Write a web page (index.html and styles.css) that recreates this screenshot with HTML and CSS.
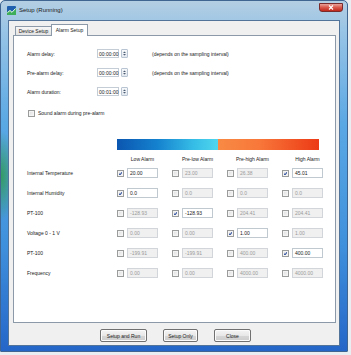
FILE: index.html
```html
<!DOCTYPE html>
<html lang="en">
<head>
    <meta charset="UTF-8">
    <title>Setup (Running)</title>
    <link rel="stylesheet" href="styles.css">
</head>
<body>

    <div class="window">
        <div class="titlebar">
            <svg class="app-icon" viewBox="0 0 9 9">
                <rect x="0" y="0" width="9" height="9" rx="1" fill="#1f5fae"/>
                <path d="M0 9 L0 6 L3 4 L5 6 L9 2 L9 9 Z" fill="#3fae5a"/>
                <path d="M0.5 6.5 L3 4.5 L5 6.3 L8.5 2.5" stroke="#ffffff" stroke-width="0.9" fill="none"/>
            </svg>
            <span class="title">Setup (Running)</span>
            <div class="close-btn">
                <svg viewBox="0 0 6 5"><path d="M1 0.5 L5 4.5 M5 0.5 L1 4.5" stroke="#ffffff" stroke-width="1.1"/></svg>
            </div>
        </div>

        <div class="client">
            <div class="tabs">
                <div class="tab">Device Setup</div>
                <div class="tab active">Alarm Setup</div>
            </div>

            <div class="panel">
                <div class="setting-row">
                    <span class="setting-label">Alarm delay:</span>
                    <span class="time-box">00:00:00</span>
                    <span class="spin"><svg viewBox="0 0 5 7"><path d="M1 3 L2.5 1.5 L4 3 Z M1 4 L2.5 5.5 L4 4 Z" fill="#4a5a70"/></svg></span>
                    <span class="note">(depends on the sampling interval)</span>
                </div>
                <div class="setting-row">
                    <span class="setting-label">Pre-alarm delay:</span>
                    <span class="time-box">00:00:00</span>
                    <span class="spin"><svg viewBox="0 0 5 7"><path d="M1 3 L2.5 1.5 L4 3 Z M1 4 L2.5 5.5 L4 4 Z" fill="#4a5a70"/></svg></span>
                    <span class="note">(depends on the sampling interval)</span>
                </div>
                <div class="setting-row">
                    <span class="setting-label">Alarm duration:</span>
                    <span class="time-box">00:01:00</span>
                    <span class="spin"><svg viewBox="0 0 5 7"><path d="M1 3 L2.5 1.5 L4 3 Z M1 4 L2.5 5.5 L4 4 Z" fill="#4a5a70"/></svg></span>
                </div>

                <div class="sound-row">
                    <span class="checkbox"></span>
                    <span>Sound alarm during pre-alarm</span>
                </div>

                <div class="alarm-grid">
                    <div></div>
                    <div class="gradient-bar"></div>

                    <div></div>
                    <div class="header">Low Alarm</div>
                    <div class="header">Pre-low Alarm</div>
                    <div class="header">Pre-high Alarm</div>
                    <div class="header">High Alarm</div>

                    <div class="row-label">Internal Temperature</div>
                    <div class="cell"><span class="checkbox checked"></span><span class="value">20.00</span></div>
                    <div class="cell"><span class="checkbox"></span><span class="value disabled">23.00</span></div>
                    <div class="cell"><span class="checkbox"></span><span class="value disabled">26.38</span></div>
                    <div class="cell"><span class="checkbox checked"></span><span class="value">45.01</span></div>

                    <div class="row-label">Internal Humidity</div>
                    <div class="cell"><span class="checkbox checked"></span><span class="value">0.0</span></div>
                    <div class="cell"><span class="checkbox"></span><span class="value disabled">0.0</span></div>
                    <div class="cell"><span class="checkbox"></span><span class="value disabled">0.0</span></div>
                    <div class="cell"><span class="checkbox"></span><span class="value disabled">0.0</span></div>

                    <div class="row-label">PT-100</div>
                    <div class="cell"><span class="checkbox"></span><span class="value disabled">-128.93</span></div>
                    <div class="cell"><span class="checkbox checked"></span><span class="value">-128.93</span></div>
                    <div class="cell"><span class="checkbox"></span><span class="value disabled">204.41</span></div>
                    <div class="cell"><span class="checkbox"></span><span class="value disabled">204.41</span></div>

                    <div class="row-label">Voltage 0 - 1 V</div>
                    <div class="cell"><span class="checkbox"></span><span class="value disabled">0.00</span></div>
                    <div class="cell"><span class="checkbox"></span><span class="value disabled">0.00</span></div>
                    <div class="cell"><span class="checkbox checked"></span><span class="value">1.00</span></div>
                    <div class="cell"><span class="checkbox"></span><span class="value disabled">1.00</span></div>

                    <div class="row-label">PT-100</div>
                    <div class="cell"><span class="checkbox"></span><span class="value disabled">-199.91</span></div>
                    <div class="cell"><span class="checkbox"></span><span class="value disabled">-199.91</span></div>
                    <div class="cell"><span class="checkbox"></span><span class="value disabled">400.00</span></div>
                    <div class="cell"><span class="checkbox checked"></span><span class="value">400.00</span></div>

                    <div class="row-label">Frequency</div>
                    <div class="cell"><span class="checkbox"></span><span class="value disabled">0.00</span></div>
                    <div class="cell"><span class="checkbox"></span><span class="value disabled">0.00</span></div>
                    <div class="cell"><span class="checkbox"></span><span class="value disabled">4000.00</span></div>
                    <div class="cell"><span class="checkbox"></span><span class="value disabled">4000.00</span></div>
                </div>
            </div>

            <div class="button-row">
                <button class="btn-run">Setup and Run</button>
                <button class="btn-only">Setup Only</button>
                <button class="btn-close">Close</button>
            </div>
        </div>
    </div>

</body>
</html>
```

FILE: styles.css
```css
body {
    margin: 0;
    background-color: #e9eef3;
    font-family: "Liberation Sans", Arial, sans-serif;
    font-size: 5px;
    color: #1a1a1a;
}
.window {
    width: 348px;
    height: 352px;
    box-sizing: border-box;
    display: flex;
    flex-direction: column;
    border: 1px solid #3f6590;
    border-radius: 5px 5px 1px 1px;
    background-color: #4c9ae0;
    background-image:
        radial-gradient(16px 45px at 0 175px, rgba(50, 155, 90, 0.95), rgba(50, 155, 90, 0)),
        linear-gradient(to bottom, #b4cee2 0px, #98c4e6 30px, #5aa8e4 35%, #3f90dc 70%, #2466c8 100%);
}
.titlebar {
    height: 19px;
    display: flex;
    align-items: flex-start;
    padding: 0 4px 0 6px;
    box-sizing: border-box;
}
.app-icon {
    width: 9px;
    height: 9px;
    margin-top: 5px;
}
.title {
    margin: 6px 0 0 3px;
    font-size: 6px;
    color: #1a1a1a;
}
.close-btn {
    margin-left: auto;
    margin-top: 2px;
    width: 24px;
    height: 9px;
    border: 1px solid #7a2a2a;
    border-radius: 0 0 3px 3px;
    box-sizing: border-box;
    background: linear-gradient(to bottom, #e8a39a 0%, #d9564a 50%, #c0281c 100%);
    display: flex;
    justify-content: center;
    align-items: center;
}
.close-btn svg {
    width: 6px;
    height: 5px;
}
.client {
    flex: 1;
    margin: 0 7px 5px;
    background-color: #f0f0f0;
    border: 1px solid #52739a;
    display: flex;
    flex-direction: column;
}
.tabs {
    height: 14px;
    display: flex;
    align-items: flex-end;
    padding-left: 6px;
}
.tab {
    height: 9px;
    width: 37px;
    box-sizing: border-box;
    border: 1px solid #8c99a8;
    border-bottom: none;
    background: linear-gradient(to bottom, #f6f6f6, #e2e2e2);
    display: flex;
    align-items: center;
    justify-content: center;
}
.tab.active {
    height: 12px;
    margin: 0 0 -1px -1px;
    background: #ffffff;
    position: relative;
    z-index: 1;
    padding-bottom: 1px;
}
.panel {
    height: 288px;
    margin: 0 3px 0 4px;
    box-sizing: border-box;
    background-color: #ffffff;
    border: 1px solid #8c99a8;
    padding: 8px 0 0 13px;
}
.setting-row {
    height: 19px;
    display: flex;
    align-items: center;
}
.setting-label {
    width: 70px;
}
.time-box {
    width: 22px;
    height: 9px;
    box-sizing: border-box;
    border: 1px solid #c4ccd6;
    background-color: #ffffff;
    display: flex;
    align-items: center;
    padding-left: 1px;
}
.spin {
    width: 7px;
    height: 9px;
    margin-left: 2px;
    box-sizing: border-box;
    border: 1px solid #b8c4d2;
    border-radius: 1px;
    background: linear-gradient(to bottom, #f7f9fb, #e2e8ef);
    display: flex;
    align-items: center;
    justify-content: center;
}
.spin svg {
    width: 5px;
    height: 7px;
}
.note {
    margin-left: 24px;
}
.sound-row {
    height: 12px;
    margin-top: 6px;
    display: flex;
    align-items: center;
    gap: 3px;
    padding-left: 1px;
}
.checkbox {
    width: 7px;
    height: 7px;
    flex: none;
    box-sizing: border-box;
    border: 1px solid #9a9b9b;
    background: linear-gradient(135deg, #dcdcdc, #f8f8f8);
    box-shadow: inset 0 0 0 1px #f4f4f4;
}
.checkbox.checked {
    background-image: url("data:image/svg+xml,%3Csvg xmlns='http://www.w3.org/2000/svg' viewBox='0 0 5 5'%3E%3Cpath d='M0.8 2.6 L2 3.8 L4.3 1' stroke='%232d4f9e' stroke-width='1.1' fill='none'/%3E%3C/svg%3E"), linear-gradient(135deg, #dcdcdc, #f8f8f8);
    background-size: 5px 5px, auto;
    background-position: center, center;
    background-repeat: no-repeat;
}
.alarm-grid {
    margin-top: 20px;
    display: grid;
    grid-template-columns: 90px repeat(4, 55px);
    grid-template-rows: 11px 13px repeat(6, 20px);
}
.gradient-bar {
    grid-column: span 4;
    width: 202px;
    background: linear-gradient(to right, #0b56b0 0%, #1582cf 20%, #36bde6 38%, #4fd6ee 50%, #f88a44 50%, #f8783a 70%, #ec3a16 100%);
}
.header {
    width: 31px;
    margin-left: 10px;
    display: flex;
    align-items: flex-end;
    justify-content: center;
    white-space: nowrap;
    padding-bottom: 1px;
}
.row-label {
    display: flex;
    align-items: center;
}
.cell {
    display: flex;
    align-items: center;
    gap: 3px;
}
.value {
    width: 31px;
    height: 10px;
    box-sizing: border-box;
    border: 1px solid #c0c8d0;
    background-color: #ffffff;
    display: flex;
    align-items: center;
    padding-left: 2px;
}
.value.disabled {
    background-color: #f0f0f0;
    border-color: #d2d6db;
    color: #9a9a9a;
}
.button-row {
    margin-top: 6px;
    display: flex;
    gap: 16px;
    padding-left: 91px;
}
button {
    height: 13px;
    padding: 0;
    font-family: "Liberation Sans", Arial, sans-serif;
    font-size: 5px;
    color: #1a1a1a;
    border: 1px solid #707070;
    border-radius: 2px;
    background: linear-gradient(to bottom, #f4f4f4 0%, #e8e8e8 50%, #d6d6d6 51%, #cdcdcd 100%);
    box-shadow: inset 0 0 0 1px #fbfbfb;
}
.btn-run {
    width: 47px;
}
.btn-only {
    width: 35px;
}
.btn-close {
    width: 37px;
}
```
